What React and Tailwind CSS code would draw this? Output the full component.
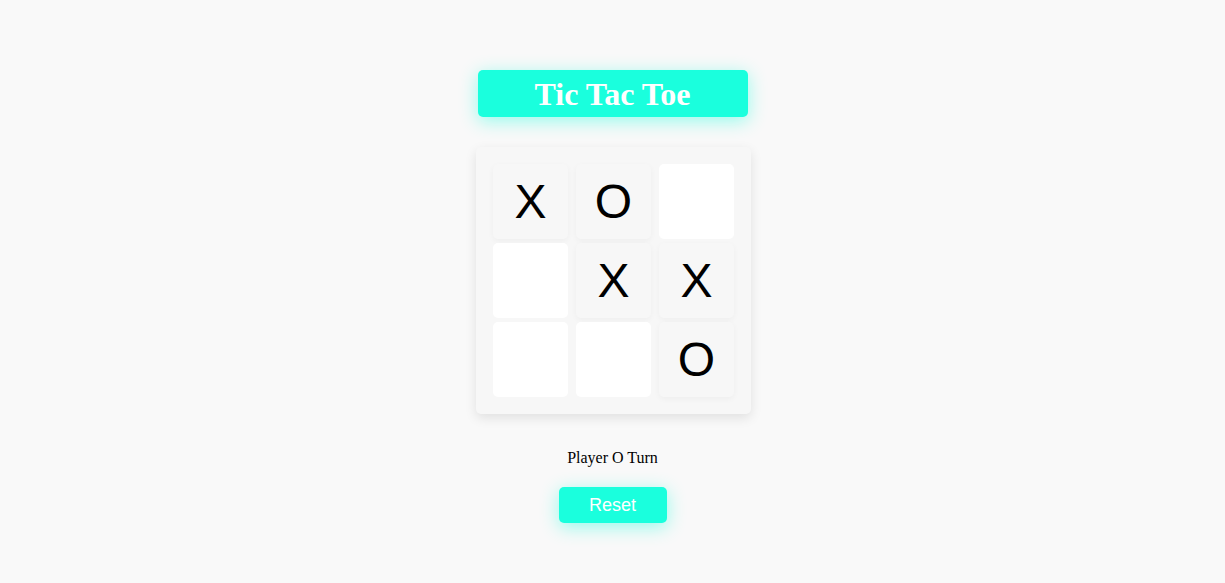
import React, { useState } from "react";

const initial = ["X", "O", "", "", "X", "X", "", "", "O"];

const Cell = ({ value, onClick }) => (
  <button
    onClick={onClick}
    className={`w-[75px] h-[75px] rounded-[5px] flex items-center justify-center text-[48px] leading-none text-black font-['Liberation_Sans',Arial,sans-serif] ${
      value
        ? "bg-[#f7f7f7] shadow-[0_2px_6px_rgba(0,0,0,0.04)]"
        : "bg-white"
    }`}
  >
    {value}
  </button>
);

export default function App() {
  const [board, setBoard] = useState(initial);
  const [turn, setTurn] = useState("O");

  const play = (i) => {
    if (board[i]) return;
    const next = [...board];
    next[i] = turn;
    setBoard(next);
    setTurn(turn === "X" ? "O" : "X");
  };

  const reset = () => {
    setBoard(Array(9).fill(""));
    setTurn("X");
  };

  return (
    <div className="min-h-screen bg-[#f9f9f9] flex flex-col items-center pt-[70px]">
      <h1 className="w-[270px] h-[47px] rounded-[5px] bg-[#1affdd] text-white text-[32px] font-bold flex items-center justify-center font-['Liberation_Serif','Times_New_Roman',serif] shadow-[0_4px_18px_rgba(26,255,221,0.45)]">
        Tic Tac Toe
      </h1>

      <div className="mt-[30px] ml-[2px] w-[275px] bg-[#f7f7f7] rounded-[5px] p-[17px] shadow-[0_4px_12px_rgba(0,0,0,0.1)] grid grid-cols-[75px_75px_75px] gap-x-[8px] gap-y-[4px]">
        {board.map((v, i) => (
          <Cell key={i} value={v} onClick={() => play(i)} />
        ))}
      </div>

      <p className="mt-[32px] text-[16px] text-black font-['Liberation_Serif','Times_New_Roman',serif]">
        Player {turn} Turn
      </p>

      <button
        onClick={reset}
        className="mt-[17px] w-[108px] h-[36px] rounded-[5px] bg-[#1affdd] text-white text-[18px] font-['Liberation_Sans',Arial,sans-serif] shadow-[0_4px_18px_rgba(26,255,221,0.45)]"
      >
        Reset
      </button>
    </div>
  );
}
